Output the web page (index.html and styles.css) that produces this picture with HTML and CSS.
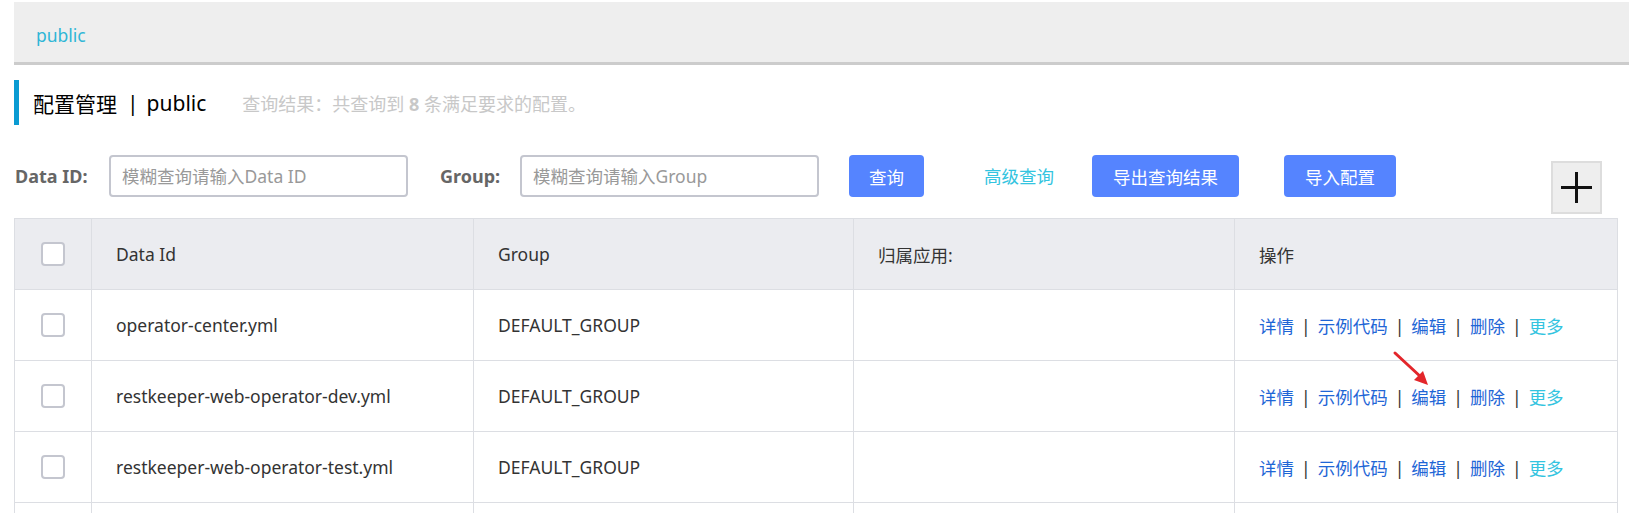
FILE: index.html
```html
<!DOCTYPE html>
<html lang="zh-CN">
<head>
<meta charset="utf-8">
<title>配置管理</title>
<link rel="stylesheet" href="styles.css">
</head>
<body>
<div class="page">
  <div class="ns-bar"><span class="ns-item">public</span></div>

  <div class="title-row">
    <span class="title-main">配置管理</span>
    <span class="title-sep">|</span>
    <span class="title-ns">public</span>
    <span class="title-desc">查询结果：共查询到 <b>8</b> 条满足要求的配置。</span>
  </div>

  <div class="filter-row">
    <label class="f-label f-label-id">Data ID:</label>
    <input class="f-input" type="text" placeholder="模糊查询请输入Data ID">
    <label class="f-label f-label-group">Group:</label>
    <input class="f-input" type="text" placeholder="模糊查询请输入Group">
    <button class="btn btn-query">查询</button>
    <span class="adv-link">高级查询</span>
    <button class="btn btn-export">导出查询结果</button>
    <button class="btn btn-import">导入配置</button>
    <button class="btn-add" aria-label="add">
      <svg width="31" height="31" viewBox="0 0 31 31"><path d="M15.5 0V31M0 15.5H31" stroke="#111" stroke-width="3"/></svg>
    </button>
  </div>

  <table class="cfg-table">
    <colgroup>
      <col class="c-check"><col class="c-id"><col class="c-group"><col class="c-app"><col class="c-ops">
    </colgroup>
    <thead>
      <tr>
        <th class="cell-check"><span class="checkbox"></span></th>
        <th>Data Id</th>
        <th>Group</th>
        <th>归属应用:</th>
        <th>操作</th>
      </tr>
    </thead>
    <tbody>
      <tr>
        <td class="cell-check"><span class="checkbox"></span></td>
        <td>operator-center.yml</td>
        <td>DEFAULT_GROUP</td>
        <td></td>
        <td class="ops"><a>详情</a><span class="sep">|</span><a>示例代码</a><span class="sep">|</span><a>编辑</a><span class="sep">|</span><a>删除</a><span class="sep">|</span><a class="more">更多</a></td>
      </tr>
      <tr>
        <td class="cell-check"><span class="checkbox"></span></td>
        <td>restkeeper-web-operator-dev.yml</td>
        <td>DEFAULT_GROUP</td>
        <td></td>
        <td class="ops"><a>详情</a><span class="sep">|</span><a>示例代码</a><span class="sep">|</span><a>编辑</a><span class="sep">|</span><a>删除</a><span class="sep">|</span><a class="more">更多</a></td>
      </tr>
      <tr>
        <td class="cell-check"><span class="checkbox"></span></td>
        <td>restkeeper-web-operator-test.yml</td>
        <td>DEFAULT_GROUP</td>
        <td></td>
        <td class="ops"><a>详情</a><span class="sep">|</span><a>示例代码</a><span class="sep">|</span><a>编辑</a><span class="sep">|</span><a>删除</a><span class="sep">|</span><a class="more">更多</a></td>
      </tr>
      <tr class="row-cut">
        <td class="cell-check"></td>
        <td></td>
        <td></td>
        <td></td>
        <td></td>
      </tr>
    </tbody>
  </table>

  <svg class="red-arrow" width="50" height="50" viewBox="0 0 50 50">
    <line x1="3" y1="3" x2="30" y2="28" stroke="#e3262b" stroke-width="3" stroke-linecap="round"/>
    <path d="M36 35 L22 30 L31 21 Z" fill="#e3262b"/>
  </svg>
</div>
</body>
</html>
```

FILE: styles.css
```css
html, body {
  margin: 0;
  padding: 0;
  background: #fff;
  overflow: hidden;
}
body {
  font-family: "Noto Sans", "Noto Sans CJK SC", sans-serif;
  font-size: 17.5px;
  color: #333;
}
.page {
  position: relative;
  padding: 2px 0 0 14px;
  width: 1615px;
}
.ns-bar {
  height: 60px;
  background: #eeeeee;
  border-bottom: 3px solid #cccccc;
  padding-left: 22px;
  display: flex;
  align-items: center;
}
.ns-item {
  color: #2fb6d6;
  font-size: 17.5px;
  margin-top: 6px;
}
.title-row {
  margin-top: 15px;
  height: 45px;
  border-left: 5px solid #0a9bd2;
  padding-left: 14px;
  display: flex;
  align-items: center;
}
.title-main,
.title-sep,
.title-ns {
  font-size: 21px;
  color: #000;
}
.title-sep {
  margin: 0 8px 0 10px;
}
.title-desc {
  margin-left: 36px;
  color: #c8c8c8;
  font-size: 18px;
}
.title-desc b {
  font-weight: 700;
}
.filter-row {
  margin-top: 30px;
  display: flex;
  align-items: flex-start;
}
.f-label {
  height: 42px;
  line-height: 42px;
  font-weight: 700;
  color: #666;
  font-size: 18px;
  white-space: nowrap;
  box-sizing: border-box;
}
.f-label-id {
  margin-left: 1px;
  width: 76px;
  margin-right: 18px;
}
.f-label-group {
  margin-left: 32px;
  width: 62px;
  margin-right: 18px;
}
.f-input {
  width: 299px;
  height: 42px;
  box-sizing: border-box;
  border: 2px solid #c4c6cf;
  border-radius: 4px;
  padding: 0 11px;
  font-family: inherit;
  font-size: 17.5px;
  color: #333;
  outline: none;
}
.f-input::placeholder {
  color: #999;
}
.btn {
  height: 42px;
  border: none;
  border-radius: 4px;
  background: #5584ff;
  color: #fff;
  font-family: inherit;
  font-size: 17.5px;
  padding: 0;
  cursor: pointer;
}
.btn-query {
  margin-left: 30px;
  width: 75px;
}
.adv-link {
  margin-left: 60px;
  height: 42px;
  line-height: 42px;
  color: #33c4e0;
  white-space: nowrap;
}
.btn-export {
  margin-left: 38px;
  width: 147px;
}
.btn-import {
  margin-left: 45px;
  width: 112px;
}
.btn-add {
  margin-left: auto;
  margin-right: 27px;
  margin-top: 6px;
  width: 51px;
  height: 53px;
  box-sizing: border-box;
  background: #eeeeee;
  border: 2px solid #dddddd;
  display: flex;
  align-items: center;
  justify-content: center;
  padding: 0;
}
.cfg-table {
  margin-top: 4px;
  width: 1603px;
  border-collapse: collapse;
  table-layout: fixed;
  border: 1px solid #dcdee3;
}
.c-check { width: 77px; }
.c-id { width: 382px; }
.c-group { width: 380px; }
.c-app { width: 381px; }
.c-ops { width: 383px; }
.cfg-table th,
.cfg-table td {
  height: 71px;
  box-sizing: border-box;
  border: 1px solid #dcdee3;
  padding: 0 0 0 24px;
  text-align: left;
  font-weight: 400;
  color: #333;
  font-size: 17.5px;
  white-space: nowrap;
}
.cfg-table th {
  background: #ebecf0;
}
.cfg-table .cell-check {
  padding: 0;
  text-align: center;
}
.checkbox {
  display: inline-block;
  width: 24px;
  height: 24px;
  box-sizing: border-box;
  border: 2px solid #c4c6cf;
  border-radius: 4px;
  background: #fff;
  vertical-align: middle;
  margin-top: -3px;
}
.ops a {
  color: #1f66d6;
  font-size: 17.5px;
}
.ops a.more {
  color: #33c4e0;
}
.ops .sep {
  color: #333;
  margin: 0 7px;
}
.red-arrow {
  position: absolute;
  left: 1392px;
  top: 350px;
}
```
